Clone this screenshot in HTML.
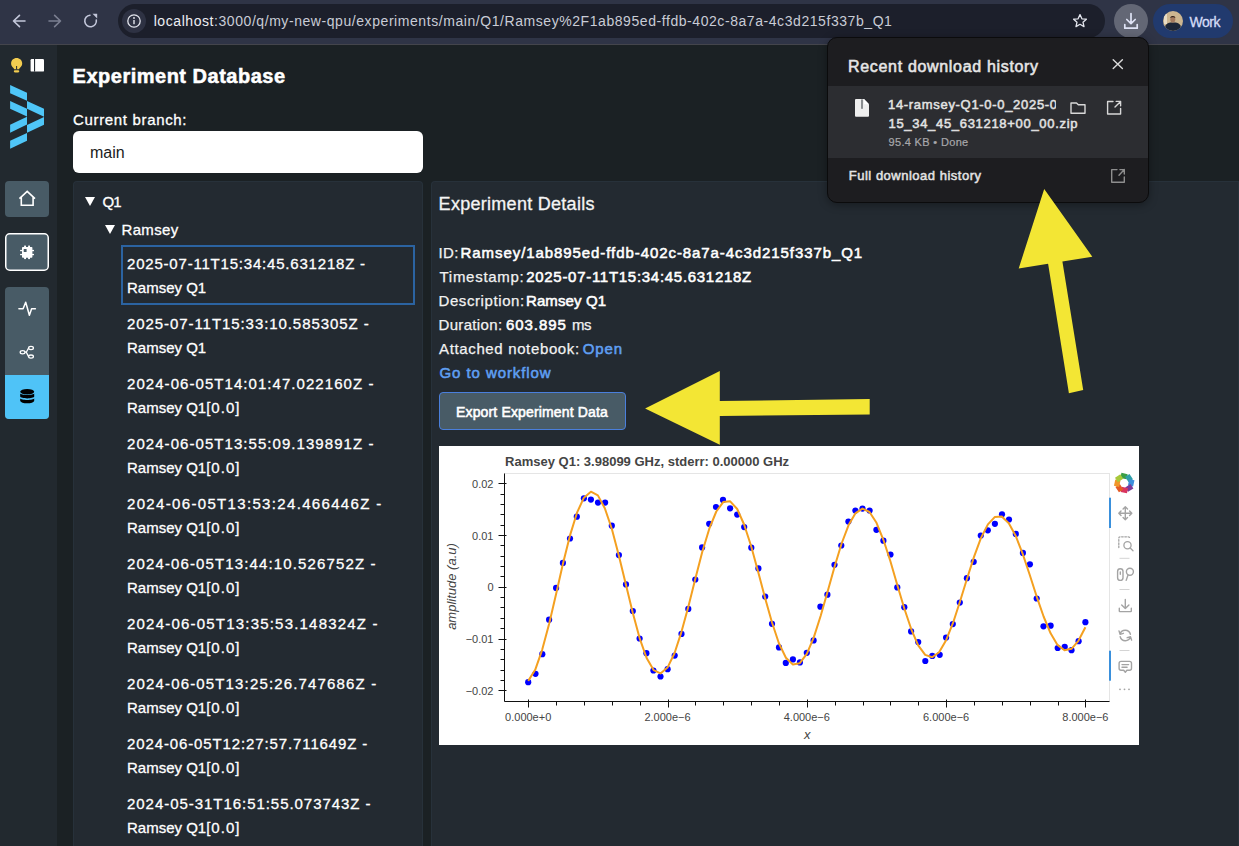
<!DOCTYPE html>
<html><head><meta charset="utf-8">
<style>
*{margin:0;padding:0;box-sizing:border-box}
html,body{width:1239px;height:846px;overflow:hidden;background:#1b2124;font-family:"Liberation Sans",sans-serif;color:#fff}
.a{position:absolute}
.nw{white-space:nowrap}
#chrome{left:0;top:0;width:1239px;height:45px;background:#2f3446;border-bottom:1px solid #44454c}
#url{left:118px;top:4px;width:987px;height:34px;border-radius:17px;background:#1c1f2b}
#sidebar{left:0;top:45px;width:57px;height:801px;background:#22292f}
.sbtn{left:5px;width:44px;background:#485b66;border-radius:5px}
.panel{background:#232a31;border:1px solid #27313a;border-bottom:0}
.tree-item{left:127px;font-size:15px;line-height:24px;white-space:nowrap;-webkit-text-stroke:0.3px #fff}
.ts{letter-spacing:0.77px}
.det{left:439px;font-size:15px;line-height:24px;white-space:nowrap;color:#f2f2f2;-webkit-text-stroke:0.25px #f2f2f2}
.val{color:#fff;-webkit-text-stroke:0.55px #fff}
.det.lnk{color:#5f9ff2;-webkit-text-stroke:0.55px #5f9ff2}
</style></head><body>

<!-- browser chrome -->
<div id="chrome" class="a"></div>
<div id="url" class="a"></div>
<div class="a" style="left:122px;top:9px;width:24px;height:24px;border-radius:12px;background:#2e3243"></div>
<svg class="a" style="left:0;top:0" width="118" height="44" viewBox="0 0 118 44">
<g fill="none" stroke="#c3c7da" stroke-width="1.6" stroke-linecap="round" stroke-linejoin="round">
<path d="M13.5 21H25M19.5 15.3L13.5 21L19.5 26.7"/>
<path d="M90 15.2A5.8 5.8 0 1 0 96.3 20" />
</g>
<path d="M92.5 13.8L97.2 13.8L97.2 18.5Z" fill="#c3c7da"/>
<path d="M49 21H60.5M54.6 15.3L60.5 21L54.6 26.7" fill="none" stroke="#7b7f91" stroke-width="1.6" stroke-linecap="round" stroke-linejoin="round"/>
</svg>
<svg class="a" style="left:122px;top:9px" width="24" height="24" viewBox="0 0 24 24">
<circle cx="12" cy="12" r="6.2" fill="none" stroke="#e4e6ee" stroke-width="1.3"/>
<rect x="11.3" y="11" width="1.4" height="4.2" fill="#e4e6ee"/><circle cx="12" cy="9" r="0.9" fill="#e4e6ee"/>
</svg>
<svg class="a" style="left:1068px;top:9px" width="24" height="24" viewBox="0 0 24 24">
<path d="M12 5.6L13.9 9.8L18.4 10.2L15 13.2L16 17.6L12 15.3L8 17.6L9 13.2L5.6 10.2L10.1 9.8Z" fill="none" stroke="#e4e6ee" stroke-width="1.3" stroke-linejoin="round"/>
</svg>
<div class="a" style="left:1114px;top:4px;width:34px;height:34px;border-radius:17px;background:#636775"></div>
<svg class="a" style="left:1114px;top:4px" width="34" height="34" viewBox="0 0 34 34">
<g fill="none" stroke="#dfe3f5" stroke-width="1.7" stroke-linecap="round" stroke-linejoin="round">
<path d="M17 9.5V19.5M12.8 15.5L17 19.7L21.2 15.5M10.8 20.5V24.2H23.2V20.5"/>
</g>
</svg>
<div class="a" style="left:1153px;top:4px;width:80px;height:34px;border-radius:17px;background:#213a6e"></div>
<svg class="a" style="left:1163px;top:11px" width="20" height="20" viewBox="0 0 20 20">
<defs><clipPath id="av"><circle cx="10" cy="10" r="10"/></clipPath></defs>
<g clip-path="url(#av)">
<rect width="20" height="20" fill="#cdb690"/>
<rect x="1" y="3" width="3" height="10" fill="#e8dcc4"/>
<path d="M1.5 20L2.5 14.5C3.5 12.5 6 11.8 7.5 11.5H12.5C14 11.8 16.5 12.5 17.5 14.5L18.5 20Z" fill="#1d2738"/>
<ellipse cx="9.8" cy="8.3" rx="2.5" ry="3.2" fill="#a47a5e"/>
<path d="M7.2 7.2C7.2 4.3 12.4 4.3 12.4 7.2C11.5 6 8.1 6 7.2 7.2Z" fill="#2b1d17"/>
</g>
</svg>
<div id="wk" class="a nw" style="left:1189.6px;top:12.6px;font-size:14px;line-height:18px;color:#d5dcf7;letter-spacing:-0.5px;-webkit-text-stroke:0.3px #d5dcf7">Work</div>
<div id="url1" class="a nw" style="left:153.7px;top:12px;font-size:14px;line-height:18px;letter-spacing:0.564px;color:#c9ccd6"><span style="color:#eceef3">localhost</span>:3000/q/my-new-qpu/experiments/main/Q1/Ramsey%2F1ab895ed-ffdb-402c-8a7a-4c3d215f337b_Q1</div>

<!-- sidebar -->
<div id="sidebar" class="a"></div>
<svg class="a" style="left:0;top:45px" width="57" height="400" viewBox="0 45 57 400">
<!-- bulb -->
<path d="M16.6 58.1C13.5 58.1 11.1 60.5 11.1 63.5C11.1 65.6 12.2 66.7 13.2 67.8C13.8 68.4 14 68.9 14.1 69.3H19.1C19.2 68.9 19.4 68.4 20 67.8C21 66.7 22.2 65.6 22.2 63.5C22.2 60.5 19.7 58.1 16.6 58.1Z" fill="#f3cd50"/>
<rect x="13.8" y="70.2" width="5.5" height="2.2" rx="1.1" fill="#f3cd50"/>
<rect x="16.1" y="66" width="1" height="3.4" fill="#22292f"/>
<!-- panel toggle -->
<rect x="30.6" y="59" width="13.4" height="12.6" rx="1.2" fill="#fff"/>
<rect x="34" y="59" width="1.1" height="12.6" fill="#22292f"/>
<!-- logo -->
<g fill="#4fc6f8">
<polygon points="10.1,85.1 27,92.8 27,100.8 10.1,93.3"/>
<polygon points="10.1,101.1 27,108.8 27,116.5 10.1,108.8"/>
<polygon points="27,101.1 44,108.8 44,116.7 27,108.8"/>
<polygon points="10.1,124.7 27,116.8 27,124.5 10.1,132.7"/>
<polygon points="27,125 44,117 44,124.8 27,132.8"/>
<polygon points="10.1,140.8 27,133 27,140.8 10.1,148.7"/>
</g>
<!-- buttons -->
<rect x="5" y="181" width="44" height="36" rx="4" fill="#485b66"/>
<path d="M19.4 198.6L27.2 191.4L35 198.6M21.3 197V205.3H33.1V197" fill="none" stroke="#fff" stroke-width="1.6" stroke-linejoin="miter"/>
<rect x="5.75" y="233.75" width="42.5" height="36.5" rx="4" fill="#485b66" stroke="#fff" stroke-width="1.5"/>
<g fill="#fff">
<rect x="22" y="247" width="10.4" height="10.7" rx="0.8"/>
<rect x="24.1" y="245.6" width="1.9" height="2"/><rect x="28.1" y="245.6" width="1.9" height="2"/>
<rect x="24.1" y="257" width="1.9" height="2.1"/><rect x="28.1" y="257" width="1.9" height="2.1"/>
<rect x="20.1" y="249.9" width="2.4" height="1.3"/><rect x="20.1" y="253.9" width="2.4" height="1.3"/>
<rect x="32" y="249.9" width="2" height="1.3"/><rect x="32" y="253.9" width="2" height="1.3"/>
</g>
<rect x="23.7" y="249" width="2.9" height="3" rx="0.5" fill="#485b66"/>
<rect x="5" y="287" width="44" height="132" rx="4" fill="#485b66"/>
<path d="M5 375H49V415A4 4 0 0 1 45 419H9A4 4 0 0 1 5 415Z" fill="#4fc3f7"/>
<polyline points="18.9,308.8 23.1,308.8 25.7,302.2 29.4,315.2 31.6,308.8 35.4,308.8" fill="none" stroke="#fff" stroke-width="1.5" stroke-linejoin="round" stroke-linecap="round"/>
<g fill="none" stroke="#fff" stroke-width="1.3">
<ellipse cx="22.6" cy="352.2" rx="2.4" ry="1.6"/>
<ellipse cx="31" cy="348" rx="2.4" ry="1.6"/>
<ellipse cx="31" cy="356.6" rx="2.4" ry="1.6"/>
<path d="M25 352.2H26.3L28.6 348H28.6M26.3 352.2L28.6 356.6"/>
</g>
<g fill="#000">
<ellipse cx="27.2" cy="391.8" rx="7" ry="2.8"/>
<path d="M20.2 393.2C20.5 395.5 34 395.5 34.2 393.2V396.6C34 399 20.5 399 20.2 396.6Z"/>
<path d="M20.2 398.2C20.5 400.5 34 400.5 34.2 398.2V400.8C34 404.2 20.5 404.2 20.2 400.8Z"/>
</g>
</svg>

<!-- main -->
<div id="h1" class="a nw" style="left:72.6px;top:63px;font-size:20px;line-height:26px;font-weight:bold;letter-spacing:0.5px;-webkit-text-stroke:0.5px #fff">Experiment Database</div>
<div id="cb" class="a nw" style="left:73px;top:110px;font-size:15px;line-height:20px;letter-spacing:0.664px;-webkit-text-stroke:0.3px #fff">Current branch:</div>
<div class="a" style="left:73px;top:131px;width:350px;height:42px;background:#fff;border-radius:6px"></div>
<div class="a nw" style="left:90px;top:143px;font-size:16px;line-height:20px;color:#1b1b1b">main</div>

<div class="a panel" style="left:73px;top:181px;width:350px;height:665px;border-radius:4px 4px 0 0"></div>
<div class="a panel" style="left:431px;top:181px;width:808px;height:665px;border-radius:4px 0 0 0"></div>

<!-- tree -->
<div class="a" style="left:85.3px;top:196.8px;width:0;height:0;border-left:5.1px solid transparent;border-right:5.1px solid transparent;border-top:9px solid #fff"></div>
<div id="q1" class="a nw" style="left:102.5px;top:190px;font-size:15px;line-height:24px;-webkit-text-stroke:0.3px #fff;letter-spacing:-1.0px">Q1</div>
<div class="a" style="left:105px;top:225px;width:0;height:0;border-left:5.1px solid transparent;border-right:5.1px solid transparent;border-top:9px solid #fff"></div>
<div id="rm" class="a nw" style="left:121.5px;top:218px;font-size:15px;line-height:24px;-webkit-text-stroke:0.3px #fff;letter-spacing:0.34px">Ramsey</div>
<div class="a" style="left:121px;top:245px;width:294px;height:60px;border:2px solid #2b63a1"></div>

<div class="a tree-item" style="top:251.5px"><span class="ts" style="letter-spacing:0.8px">2025-07-11T15:34:45.631218Z -</span><br>Ramsey Q1</div>
<div class="a tree-item" style="top:311.5px"><span class="ts" style="letter-spacing:0.927px">2025-07-11T15:33:10.585305Z -</span><br>Ramsey Q1</div>
<div class="a tree-item" style="top:371.5px"><span class="ts" style="letter-spacing:1.056px">2024-06-05T14:01:47.022160Z -</span><br>Ramsey Q1<span style="letter-spacing:1px">[0.0]</span></div>
<div class="a tree-item" style="top:431.5px"><span class="ts" style="letter-spacing:1.056px">2024-06-05T13:55:09.139891Z -</span><br>Ramsey Q1<span style="letter-spacing:1px">[0.0]</span></div>
<div class="a tree-item" style="top:491.5px"><span class="ts" style="letter-spacing:1.334px">2024-06-05T13:53:24.466446Z -</span><br>Ramsey Q1<span style="letter-spacing:1px">[0.0]</span></div>
<div class="a tree-item" style="top:551.5px"><span class="ts" style="letter-spacing:1.13px">2024-06-05T13:44:10.526752Z -</span><br>Ramsey Q1<span style="letter-spacing:1px">[0.0]</span></div>
<div class="a tree-item" style="top:611.5px"><span class="ts" style="letter-spacing:1.206px">2024-06-05T13:35:53.148324Z -</span><br>Ramsey Q1<span style="letter-spacing:1px">[0.0]</span></div>
<div class="a tree-item" style="top:671.5px"><span class="ts" style="letter-spacing:1.156px">2024-06-05T13:25:26.747686Z -</span><br>Ramsey Q1<span style="letter-spacing:1px">[0.0]</span></div>
<div class="a tree-item" style="top:731.5px"><span class="ts" style="letter-spacing:0.88px">2024-06-05T12:27:57.711649Z -</span><br>Ramsey Q1<span style="letter-spacing:1px">[0.0]</span></div>
<div class="a tree-item" style="top:791.5px"><span class="ts" style="letter-spacing:0.956px">2024-05-31T16:51:55.073743Z -</span><br>Ramsey Q1<span style="letter-spacing:1px">[0.0]</span></div>

<!-- details -->
<div id="h2" class="a nw" style="left:438.6px;top:192px;font-size:18px;line-height:24px;color:#f4f4f4;letter-spacing:0.282px;-webkit-text-stroke:0.3px #f4f4f4">Experiment Details</div>
<div id="d1a" class="a det" style="top:241px;left:438.5px;letter-spacing:0.4px">ID:</div>
<div id="d1b" class="a det val" style="top:241px;left:460.6px;letter-spacing:0.924px">Ramsey/1ab895ed-ffdb-402c-8a7a-4c3d215f337b_Q1</div>
<div id="d2a" class="a det" style="top:265px;left:439.5px;letter-spacing:0.722px">Timestamp:</div>
<div id="d2b" class="a det val" style="top:265px;left:526.2px;letter-spacing:0.712px">2025-07-11T15:34:45.631218Z</div>
<div id="d3a" class="a det" style="top:289px;left:438.5px;letter-spacing:0.591px">Description:</div>
<div id="d3b" class="a det val" style="top:289px;left:526px;letter-spacing:0.1px">Ramsey Q1</div>
<div id="d4a" class="a det" style="top:313px;left:438.5px;letter-spacing:0.337px">Duration:</div>
<div id="d4b" class="a det val" style="top:313px;left:506px;letter-spacing:0.933px">603.895</div>
<div id="d4c" class="a det" style="top:313px;left:571.9px;letter-spacing:-0.3px">ms</div>
<div id="d5a" class="a det" style="top:337px;left:439px;letter-spacing:0.641px">Attached notebook:</div>
<div id="d5b" class="a det lnk" style="top:337px;left:582.7px;letter-spacing:0.9px">Open</div>
<div id="d6a" class="a det lnk" style="top:361px;left:439.5px;letter-spacing:0.923px">Go to workflow</div>
<div class="a" style="left:439px;top:392px;width:187px;height:38px;background:#485b66;border:1px solid #4a7fdc;border-radius:4px"></div>
<div class="a nw" style="left:456px;top:402px;font-size:14px;line-height:20px;letter-spacing:0.15px;-webkit-text-stroke:0.55px #fff">Export Experiment Data</div>

<svg class="a" style="left:439px;top:446px" width="700" height="299" viewBox="0 0 700 299">
<rect x="0" y="0" width="700" height="299" fill="#fff"/>
<text x="66.10000000000002" y="20.399999999999977" font-family="Liberation Sans" font-size="13" font-weight="bold" fill="#444">Ramsey Q1: 3.98099 GHz, stderr: 0.00000 GHz</text>
<rect x="65.5" y="27.5" width="605.0" height="228.0" fill="none" stroke="#e5e5e5" stroke-width="1"/>
<line x1="65.5" y1="27.5" x2="65.5" y2="255.5" stroke="#111" stroke-width="1"/>
<line x1="65.5" y1="255.5" x2="670.5" y2="255.5" stroke="#111" stroke-width="1"/>
<path d="M59.5 244.5H67.5 M61.5 234.5H65.5 M61.5 224.5H65.5 M61.5 213.5H65.5 M61.5 203.5H65.5 M59.5 193.5H67.5 M61.5 182.5H65.5 M61.5 172.5H65.5 M61.5 161.5H65.5 M61.5 151.5H65.5 M59.5 141.5H67.5 M61.5 130.5H65.5 M61.5 120.5H65.5 M61.5 110.5H65.5 M61.5 99.5H65.5 M59.5 89.5H67.5 M61.5 79.5H65.5 M61.5 68.5H65.5 M61.5 58.5H65.5 M61.5 48.5H65.5 M59.5 37.5H67.5 M89.5 253.5V261.5 M117.5 255.5V259.5 M145.5 255.5V259.5 M173.5 255.5V259.5 M201.5 255.5V259.5 M229.5 253.5V261.5 M256.5 255.5V259.5 M284.5 255.5V259.5 M312.5 255.5V259.5 M340.5 255.5V259.5 M368.5 253.5V261.5 M396.5 255.5V259.5 M424.5 255.5V259.5 M451.5 255.5V259.5 M479.5 255.5V259.5 M507.5 253.5V261.5 M535.5 255.5V259.5 M563.5 255.5V259.5 M591.5 255.5V259.5 M619.5 255.5V259.5 M646.5 253.5V261.5" stroke="#111" stroke-width="1" fill="none"/>
<text x="54.5" y="41.89999999999998" text-anchor="end" font-family="Liberation Sans" font-size="11" fill="#444">0.02</text>
<text x="54.5" y="93.59999999999991" text-anchor="end" font-family="Liberation Sans" font-size="11" fill="#444">0.01</text>
<text x="54.5" y="145.29999999999995" text-anchor="end" font-family="Liberation Sans" font-size="11" fill="#444">0</text>
<text x="54.5" y="197.0" text-anchor="end" font-family="Liberation Sans" font-size="11" fill="#444">−0.01</text>
<text x="54.5" y="248.69999999999993" text-anchor="end" font-family="Liberation Sans" font-size="11" fill="#444">−0.02</text>
<text x="89.20000000000005" y="274.5" text-anchor="middle" font-family="Liberation Sans" font-size="11" fill="#444">0.000e+0</text>
<text x="228.5" y="274.5" text-anchor="middle" font-family="Liberation Sans" font-size="11" fill="#444">2.000e−6</text>
<text x="367.80000000000007" y="274.5" text-anchor="middle" font-family="Liberation Sans" font-size="11" fill="#444">4.000e−6</text>
<text x="507.10000000000014" y="274.5" text-anchor="middle" font-family="Liberation Sans" font-size="11" fill="#444">6.000e−6</text>
<text x="646.4000000000001" y="274.5" text-anchor="middle" font-family="Liberation Sans" font-size="11" fill="#444">8.000e−6</text>
<text x="368.20000000000005" y="292.79999999999995" text-anchor="middle" font-family="Liberation Sans" font-size="13" font-style="italic" fill="#444">x</text>
<text transform="translate(16.80000000000001,140.5) rotate(-90)" text-anchor="middle" font-family="Liberation Sans" font-size="13" font-style="italic" fill="#444">amplitude (a.u)</text>
<g fill="#0000ff"><circle cx="89.2" cy="236.2" r="3.1"/><circle cx="96.5" cy="227.8" r="3.1"/><circle cx="103.3" cy="208.2" r="3.1"/><circle cx="110.1" cy="173.7" r="3.1"/><circle cx="117.1" cy="141.9" r="3.1"/><circle cx="123.9" cy="116.9" r="3.1"/><circle cx="131.0" cy="92.5" r="3.1"/><circle cx="137.8" cy="70.7" r="3.1"/><circle cx="144.9" cy="52.3" r="3.1"/><circle cx="151.9" cy="53.6" r="3.1"/><circle cx="159.0" cy="56.6" r="3.1"/><circle cx="166.1" cy="56.6" r="3.1"/><circle cx="172.8" cy="79.7" r="3.1"/><circle cx="179.9" cy="109.1" r="3.1"/><circle cx="187.0" cy="138.4" r="3.1"/><circle cx="193.8" cy="165.0" r="3.1"/><circle cx="200.6" cy="192.5" r="3.1"/><circle cx="207.4" cy="207.2" r="3.1"/><circle cx="214.4" cy="224.5" r="3.1"/><circle cx="221.5" cy="230.5" r="3.1"/><circle cx="228.6" cy="223.2" r="3.1"/><circle cx="235.7" cy="209.6" r="3.1"/><circle cx="242.5" cy="187.9" r="3.1"/><circle cx="249.3" cy="162.9" r="3.1"/><circle cx="256.3" cy="133.5" r="3.1"/><circle cx="263.1" cy="101.4" r="3.1"/><circle cx="270.2" cy="77.8" r="3.1"/><circle cx="277.0" cy="61.0" r="3.1"/><circle cx="284.0" cy="53.9" r="3.1"/><circle cx="291.1" cy="62.3" r="3.1"/><circle cx="298.2" cy="68.6" r="3.1"/><circle cx="305.2" cy="81.1" r="3.1"/><circle cx="312.3" cy="101.7" r="3.1"/><circle cx="319.4" cy="122.4" r="3.1"/><circle cx="326.2" cy="150.6" r="3.1"/><circle cx="333.0" cy="177.8" r="3.1"/><circle cx="340.0" cy="201.4" r="3.1"/><circle cx="346.8" cy="216.9" r="3.1"/><circle cx="353.9" cy="213.4" r="3.1"/><circle cx="360.9" cy="216.4" r="3.1"/><circle cx="367.8" cy="206.8" r="3.1"/><circle cx="374.6" cy="194.4" r="3.1"/><circle cx="381.4" cy="160.7" r="3.1"/><circle cx="388.4" cy="148.7" r="3.1"/><circle cx="395.5" cy="118.8" r="3.1"/><circle cx="402.3" cy="99.5" r="3.1"/><circle cx="409.4" cy="75.6" r="3.1"/><circle cx="416.4" cy="64.5" r="3.1"/><circle cx="423.5" cy="62.6" r="3.1"/><circle cx="430.6" cy="64.5" r="3.1"/><circle cx="437.4" cy="83.8" r="3.1"/><circle cx="444.4" cy="94.7" r="3.1"/><circle cx="451.5" cy="108.5" r="3.1"/><circle cx="458.3" cy="141.4" r="3.1"/><circle cx="465.3" cy="161.2" r="3.1"/><circle cx="472.1" cy="185.4" r="3.1"/><circle cx="479.2" cy="196.0" r="3.1"/><circle cx="486.3" cy="215.0" r="3.1"/><circle cx="493.3" cy="209.9" r="3.1"/><circle cx="500.7" cy="208.8" r="3.1"/><circle cx="507.1" cy="191.5" r="3.1"/><circle cx="513.8" cy="178.1" r="3.1"/><circle cx="520.8" cy="156.6" r="3.1"/><circle cx="527.9" cy="132.2" r="3.1"/><circle cx="534.7" cy="115.8" r="3.1"/><circle cx="541.8" cy="89.5" r="3.1"/><circle cx="548.8" cy="84.3" r="3.1"/><circle cx="555.9" cy="77.8" r="3.1"/><circle cx="563.0" cy="68.3" r="3.1"/><circle cx="570.0" cy="73.5" r="3.1"/><circle cx="576.8" cy="87.9" r="3.1"/><circle cx="583.9" cy="106.9" r="3.1"/><circle cx="590.9" cy="118.3" r="3.1"/><circle cx="597.7" cy="152.5" r="3.1"/><circle cx="604.5" cy="180.3" r="3.1"/><circle cx="611.6" cy="179.7" r="3.1"/><circle cx="618.7" cy="202.0" r="3.1"/><circle cx="625.7" cy="200.9" r="3.1"/><circle cx="632.5" cy="204.2" r="3.1"/><circle cx="639.6" cy="195.2" r="3.1"/><circle cx="646.4" cy="176.2" r="3.1"/></g>
<polyline points="89.2,234.9 96.2,223.8 103.1,204.1 110.1,178.0 117.1,148.0 124.0,117.5 131.0,89.4 138.0,66.7 144.9,51.7 151.9,45.7 158.9,49.4 165.8,62.2 172.8,82.8 179.7,108.9 186.7,137.8 193.7,166.5 200.6,192.1 207.6,212.0 214.6,224.1 221.5,227.4 228.5,221.6 235.5,207.3 242.4,186.1 249.4,160.4 256.4,132.6 263.3,105.8 270.3,82.7 277.3,65.5 284.2,56.1 291.2,55.3 298.2,63.0 305.1,78.5 312.1,100.0 319.0,125.2 326.0,151.7 333.0,176.5 339.9,197.2 346.9,211.7 353.9,218.6 360.8,217.2 367.8,207.8 374.8,191.4 381.7,169.8 388.7,145.3 395.7,120.3 402.6,97.5 409.6,79.1 416.6,67.1 423.5,62.6 430.5,66.0 437.5,76.8 444.4,93.8 451.4,115.3 458.3,139.0 465.3,162.5 472.3,183.3 479.2,199.3 486.2,208.9 493.2,211.3 500.1,206.2 507.1,194.2 514.1,176.7 521.0,155.5 528.0,132.8 535.0,110.9 541.9,92.1 548.9,78.4 555.9,70.9 562.8,70.6 569.8,77.2 576.8,90.1 583.7,107.9 590.7,128.7 597.6,150.3 604.6,170.5 611.6,187.3 618.5,198.9 625.5,204.2 632.5,202.8 639.4,194.8 646.4,181.2" fill="none" stroke="#f4a020" stroke-width="2" stroke-linejoin="round"/>
<rect x="670" y="51.69999999999999" width="2" height="30.3" fill="#3a90dc"/>
<rect x="670" y="204.70000000000005" width="2" height="30" fill="#3a90dc"/>
<line x1="680.5" y1="112.29999999999995" x2="690.5" y2="112.29999999999995" stroke="#d4d4d4" stroke-width="1"/>
<line x1="680.5" y1="143.5" x2="690.5" y2="143.5" stroke="#d4d4d4" stroke-width="1"/>
<line x1="680.5" y1="204.5" x2="690.5" y2="204.5" stroke="#d4d4d4" stroke-width="1"/>
<polygon points="681.32,32.04 682.43,26.85 688.69,28.18 687.58,33.37" fill="#3a9f45"/>
<polygon points="686.04,30.78 690.49,27.89 693.97,33.26 689.53,36.14" fill="#2f9fa8"/>
<polygon points="690.26,33.22 695.45,34.33 694.12,40.59 688.93,39.48" fill="#3d8fdd"/>
<polygon points="691.52,37.94 694.41,42.39 689.04,45.87 686.16,41.43" fill="#7a3a9a"/>
<polygon points="689.08,42.16 687.97,47.35 681.71,46.02 682.82,40.83" fill="#d9345e"/>
<polygon points="684.36,43.42 679.91,46.31 676.43,40.94 680.87,38.06" fill="#e35a25"/>
<polygon points="680.14,40.98 674.95,39.87 676.28,33.61 681.47,34.72" fill="#f0962a"/>
<polygon points="678.88,36.26 675.99,31.81 681.36,28.33 684.24,32.77" fill="#a8c83a"/>
<circle cx="685.2" cy="37.10000000000002" r="3.6" fill="#fff"/>
<g fill="none" stroke="#a4a4a4" stroke-width="1.4" stroke-linecap="round" stroke-linejoin="round"><path d="M679.8 67.20000000000005H692.8M686.3 60.700000000000045V73.70000000000005M684.0999999999999 62.90000000000005L686.3 60.700000000000045L688.5 62.90000000000005M684.0999999999999 71.50000000000004L686.3 73.70000000000005L688.5 71.50000000000004M682.0 65.00000000000004L679.8 67.20000000000005L682.0 69.40000000000005M690.5999999999999 65.00000000000004L692.8 67.20000000000005L690.5999999999999 69.40000000000005"/></g>
<g fill="none" stroke="#a4a4a4" stroke-width="1.3" stroke-linecap="round"><path d="M679.8 101.60000000000002V92.20000000000005Q679.8 90.79999999999995 681.2 90.79999999999995H689.3Q690.7 90.79999999999995 690.7 92.20000000000005" stroke-dasharray="1.6 1.6"/><circle cx="688.5" cy="99.29999999999995" r="3.6"/><path d="M691.2 102L694 104.79999999999995"/></g>
<g fill="none" stroke="#a4a4a4" stroke-width="1.4" stroke-linecap="round"><rect x="678.5999999999999" y="122.79999999999995" width="5.4" height="11.6" rx="2.7"/><circle cx="690.9000000000001" cy="125.70000000000005" r="3.5"/><path d="M689 129L687.2 134.39999999999998"/><path d="M681.3 126V128.20000000000005"/></g>
<g fill="none" stroke="#a4a4a4" stroke-width="1.4" stroke-linecap="round" stroke-linejoin="round"><path d="M686.3 153.5V162.5M682.6999999999999 158.9L686.3 162.5L689.9 158.9M680.3 162.3V165Q680.3 165.6 680.9 165.6H691.6999999999999Q692.3 165.6 692.3 165V162.3"/></g>
<g fill="none" stroke="#a4a4a4" stroke-width="1.4" stroke-linecap="round" stroke-linejoin="round"><path d="M681.0999999999999 187.9A5.4 5.4 0 0 1 691.4 188.3M691.5 191.1A5.4 5.4 0 0 1 681.1999999999999 190.7M680.0 184.9L681.0999999999999 188.3L684.4 187.3M692.5999999999999 194.1L691.5 190.7L688.1999999999999 191.7"/></g>
<g fill="none" stroke="#a4a4a4" stroke-width="1.4" stroke-linejoin="round" stroke-linecap="round"><path d="M682.0999999999999 215.39999999999998H690.5A2 2 0 0 1 692.5 217.39999999999998V222.2A2 2 0 0 1 690.5 224.2H687.9L686.3 226.2L684.6999999999999 224.2H682.0999999999999A2 2 0 0 1 680.0999999999999 222.2V217.39999999999998A2 2 0 0 1 682.0999999999999 215.39999999999998Z"/><path d="M683.0 218.59999999999997H689.5999999999999M683.0 221.2H688.0999999999999"/></g>
<circle cx="681.0" cy="243.29999999999995" r="0.9" fill="#a4a4a4"/>
<circle cx="685.5" cy="243.29999999999995" r="0.9" fill="#a4a4a4"/>
<circle cx="690.0" cy="243.29999999999995" r="0.9" fill="#a4a4a4"/>
</svg>


<!-- download popup -->
<div class="a" style="left:827px;top:37px;width:322px;height:166px;background:#1d1d20;border-radius:10px;border:1px solid #0b0b0c;box-shadow:0 2px 8px rgba(0,0,0,0.35);overflow:hidden">
  <div class="a" style="left:0;top:48px;width:322px;height:72px;background:#2c2d31"></div>
</div>
<div id="p1" class="a nw" style="left:848px;top:56px;font-size:16px;line-height:22px;color:#e6e6e6;-webkit-text-stroke:0.55px #e6e6e6;letter-spacing:0.677px">Recent download history</div>
<div class="a" style="left:886px;top:95px;width:170px;height:19px;overflow:hidden"><div id="p2" class="a nw" style="left:2px;top:0;font-size:13px;line-height:19px;color:#e3e3e3;-webkit-text-stroke:0.5px #e3e3e3;letter-spacing:0.688px">14-ramsey-Q1-0-0_2025-07-11T</div></div>
<div id="p3" class="a nw" style="left:888.5px;top:114px;font-size:13px;line-height:19px;color:#e3e3e3;-webkit-text-stroke:0.5px #e3e3e3;letter-spacing:0.688px">15_34_45_631218+00_00.zip</div>
<div id="p4" class="a nw" style="left:888.5px;top:135px;font-size:11px;line-height:14px;color:#a8a8ab;-webkit-text-stroke:0.2px #a8a8ab;letter-spacing:0.331px">95.4 KB &#8226; Done</div>
<div id="p5" class="a nw" style="left:848.8px;top:167px;font-size:13px;line-height:18px;color:#e3e3e3;-webkit-text-stroke:0.5px #e3e3e3;letter-spacing:0.505px">Full download history</div>
<svg class="a" style="left:828px;top:37px" width="321" height="166" viewBox="828 37 321 166">
<path d="M1113.2 59.8L1122.4 68.6M1122.4 59.8L1113.2 68.6" stroke="#dcdcdc" stroke-width="1.4" stroke-linecap="round"/>
<path d="M856 99H864L869 104.3V115.8A1 1 0 0 1 868 116.8H856A1 1 0 0 1 855 115.8V100A1 1 0 0 1 856 99Z" fill="#eeeeee"/>
<path d="M864 99V104.3H869Z" fill="#ffffff"/>
<rect x="861" y="99.4" width="2" height="9.4" fill="#8a8d90"/>
<path d="M1071 103H1076.5L1078.3 104.8H1085V113.2H1071Z" fill="none" stroke="#d8d8d8" stroke-width="1.4" stroke-linejoin="round"/>
<g fill="none" stroke="#d8d8d8" stroke-width="1.4" stroke-linecap="round" stroke-linejoin="round">
<path d="M1113 101.5H1107.6V114H1120.6V108.5M1115 107L1120.6 101.4M1116.2 101.4H1120.6V105.8"/>
</g>
<g fill="none" stroke="#8e8e8e" stroke-width="1.4" stroke-linecap="round" stroke-linejoin="round">
<path d="M1117 169.6H1111.7V182.3H1124.3V177M1119 175.2L1124.3 169.6M1119.9 169.6H1124.3V174"/>
</g>
</svg>

<!-- arrows -->
<svg class="a" style="left:0;top:0" width="1239" height="846" viewBox="0 0 1239 846">
<polygon points="645.1,408.4 719.8,371.1 719.8,401 869.7,398.9 869.7,414.5 719.8,415.9 719.8,444.7" fill="#f3e634"/>
<polygon points="1044.2,189.1 1092.3,256.7 1062.4,261.4 1083.2,390.1 1068.9,393.3 1048.1,263.7 1018.7,268.4" fill="#f3e634"/>
</svg>
</body></html>
